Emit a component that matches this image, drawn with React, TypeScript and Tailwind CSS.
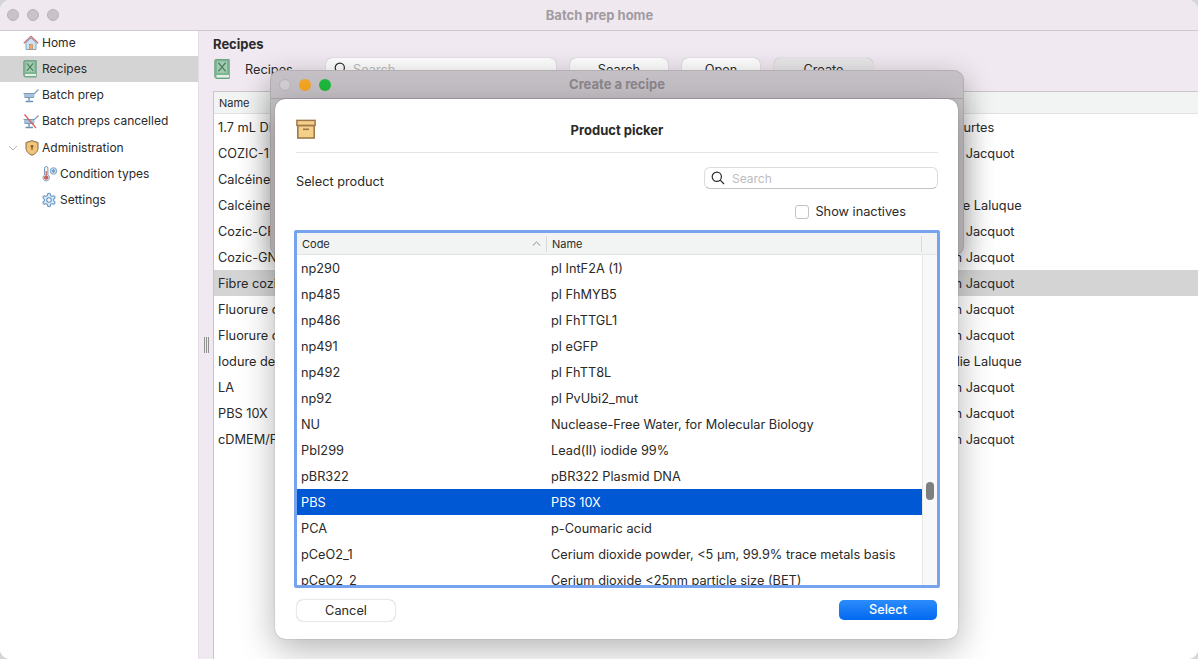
import React from "react";

const font = { fontFamily: '"Inter", "Liberation Sans", sans-serif' };

function HomeIcon() {
  return (
    <svg width="16" height="16" viewBox="0 0 16 16" className="shrink-0">
      <path d="M3 7.5V14.5H13V7.5L8 3Z" fill="#cfe3f2" stroke="#7da7c7" strokeWidth="1" />
      <rect x="6.5" y="9.5" width="3" height="5" fill="#eba96a" stroke="#c9824a" strokeWidth="0.6" />
      <path d="M0.8 8.3L8 1.3L15.2 8.3" fill="none" stroke="#c96a6a" strokeWidth="1.3" />
    </svg>
  );
}
function BookIcon({ size = 16 }: { size?: number }) {
  return (
    <svg width={size} height={size * 1.25} viewBox="0 0 16 20" className="shrink-0">
      <path d="M.8 1.8C.8 1 1.4 .5 2 .5H15.2V19.5H3C1.7 19.5 .8 18.6 .8 17.3Z" fill="#7fb593" stroke="#6aa381" strokeWidth="1" />
      <path d="M2.2 17.3C2.2 16.6 2.8 16 3.5 16H15V18.4H3.5C2.8 18.4 2.2 18 2.2 17.3Z" fill="#e3efe7" />
      <rect x="3" y="2.4" width="10" height="11.4" fill="#a3cbb1" />
      <path d="M4.4 3.8L11.6 12.4M11.6 3.8L4.4 12.4" stroke="#4a8461" strokeWidth="1.4" />
    </svg>
  );
}
function CartIcon({ cancelled = false }: { cancelled?: boolean }) {
  return (
    <svg width="16" height="16" viewBox="0 0 16 16" className="shrink-0">
      <path d="M.5 6.5H11.5L15.5 2.5" fill="none" stroke="#7d9cbc" strokeWidth="1.2" />
      <path d="M1 7H11.5V10H1Z" fill="#a9c2db" />
      <path d="M1.5 10.5H11" stroke="#7d9cbc" strokeWidth="1.2" />
      <path d="M6 10.5V13.5M2.5 14.5H10" stroke="#6f8fae" strokeWidth="1.4" />
      {cancelled && <path d="M1.5 1.5L13 15" stroke="#d8605c" strokeWidth="1.2" />}
    </svg>
  );
}
function ShieldIcon() {
  return (
    <svg width="14" height="16" viewBox="0 0 14 16" className="shrink-0">
      <path d="M7 .7L13 2.6V8C13 11.5 10.3 14 7 15.3 3.7 14 1 11.5 1 8V2.6Z" fill="#f3c478" stroke="#7d6a4c" strokeWidth="1" />
      <circle cx="7" cy="6.3" r="1.4" fill="#7d5f30" />
      <rect x="6.4" y="6.8" width="1.2" height="3.2" fill="#7d5f30" />
    </svg>
  );
}
function ThermoIcon() {
  return (
    <svg width="18" height="16" viewBox="0 0 18 16" className="shrink-0">
      <path d="M3.5 2.2a1.7 1.7 0 0 1 3.4 0V9a3.2 3.2 0 1 1-3.4 0Z" fill="#eef3f8" stroke="#7d98b5" strokeWidth="1" />
      <circle cx="5.2" cy="11.6" r="2.2" fill="#c9605a" />
      <rect x="4.6" y="5" width="1.2" height="6" fill="#c9605a" />
      <circle cx="12.5" cy="5" r="3.3" fill="#cfe0f0" stroke="#82a7cc" strokeWidth="1" />
      <path d="M12.5 2.8V7.2M10.6 3.9L14.4 6.1M14.4 3.9L10.6 6.1" stroke="#5f8cb8" strokeWidth="0.7" />
    </svg>
  );
}
function GearIcon() {
  return (
    <svg width="16" height="16" viewBox="0 0 24 24" className="shrink-0" fill="#dbe9f5" stroke="#5f93c4" strokeWidth="1.6">
      <path d="M12.22 2h-.44a2 2 0 0 0-2 2v.18a2 2 0 0 1-1 1.73l-.43.25a2 2 0 0 1-2 0l-.15-.08a2 2 0 0 0-2.73.73l-.22.38a2 2 0 0 0 .73 2.73l.15.1a2 2 0 0 1 1 1.72v.51a2 2 0 0 1-1 1.74l-.15.09a2 2 0 0 0-.73 2.73l.22.38a2 2 0 0 0 2.73.73l.15-.08a2 2 0 0 1 2 0l.43.25a2 2 0 0 1 1 1.73V20a2 2 0 0 0 2 2h.44a2 2 0 0 0 2-2v-.18a2 2 0 0 1 1-1.73l.43-.25a2 2 0 0 1 2 0l.15.08a2 2 0 0 0 2.73-.73l.22-.39a2 2 0 0 0-.73-2.73l-.15-.08a2 2 0 0 1-1-1.74v-.5a2 2 0 0 1 1-1.74l.15-.09a2 2 0 0 0 .73-2.73l-.22-.38a2 2 0 0 0-2.73-.73l-.15.08a2 2 0 0 1-2 0l-.43-.25a2 2 0 0 1-1-1.73V4a2 2 0 0 0-2-2z" />
      <circle cx="12" cy="12" r="3.4" fill="#fff" />
    </svg>
  );
}
function BoxIcon() {
  return (
    <svg width="20" height="20" viewBox="0 0 20 20" className="shrink-0">
      <rect x="1.8" y="6.5" width="16.4" height="12.5" fill="#f7cf88" stroke="#9c7a4c" strokeWidth="1.6" />
      <rect x=".9" y="1.4" width="18.2" height="5" fill="#f7cf88" stroke="#9c7a4c" strokeWidth="1.5" />
      <rect x="7" y="9.5" width="6" height="1.6" fill="#9c7a4c" />
    </svg>
  );
}
function SearchGlyph() {
  return (
    <svg width="14" height="14" viewBox="0 0 14 14" fill="none" stroke="#2b2b2b" strokeWidth="1.2" className="shrink-0">
      <circle cx="5.8" cy="5.8" r="4.6" />
      <path d="M9.2 9.2L13 13" />
    </svg>
  );
}

const navItems = [
  { icon: <HomeIcon />, label: "Home" },
  { icon: <BookIcon size={14} />, label: "Recipes", active: true },
  { icon: <CartIcon />, label: "Batch prep" },
  { icon: <CartIcon cancelled />, label: "Batch preps cancelled" },
];

const recipeRows = [
  ["1.7 mL DI", "Eva Courtes"],
  ["COZIC-1", "Florian Jacquot"],
  ["Calcéine", ""],
  ["Calcéine", "Nathalie Laluque"],
  ["Cozic-CF", "Florian Jacquot"],
  ["Cozic-GN", "Florian Jacquot"],
  ["Fibre cozi", "Florian Jacquot"],
  ["Fluorure d", "Florian Jacquot"],
  ["Fluorure d", "Florian Jacquot"],
  ["Iodure de", "Nathalie Laluque"],
  ["LA", "Florian Jacquot"],
  ["PBS 10X", "Florian Jacquot"],
  ["cDMEM/F", "Florian Jacquot"],
];

const products = [
  ["np290", "pl IntF2A (1)"],
  ["np485", "pl FhMYB5"],
  ["np486", "pl FhTTGL1"],
  ["np491", "pl eGFP"],
  ["np492", "pl FhTT8L"],
  ["np92", "pl PvUbi2_mut"],
  ["NU", "Nuclease-Free Water, for Molecular Biology"],
  ["PbI299", "Lead(II) iodide 99%"],
  ["pBR322", "pBR322 Plasmid DNA"],
  ["PBS", "PBS 10X"],
  ["PCA", "p-Coumaric acid"],
  ["pCeO2_1", "Cerium dioxide powder, <5 µm, 99.9% trace metals basis"],
  ["pCeO2_2", "Cerium dioxide <25nm particle size (BET)"],
];

function ToolButton({ label, width, shade }: { label: string; width: string; shade?: boolean }) {
  return (
    <div className={`${width} ${shade ? "bg-[#e9e7e9]" : "bg-white"} h-[22px] rounded-[6px] shadow-[0_0_1px_rgba(0,0,0,0.35)] flex items-center justify-center pt-[2px] text-[12.75px] text-[#2a2a2a]`}>
      {label}
    </div>
  );
}

export default function App() {
  return (
    <div style={font} className="relative w-[1198px] h-[659px] overflow-hidden bg-[#d5d5d8] text-[12.75px] text-[#2a2a2a] antialiased">
      {/* Main window */}
      <div className="w-full h-full flex flex-col rounded-[10px] overflow-hidden bg-white">
        <div className="relative h-[31px] shrink-0 bg-[#efe8ef] border-b border-[#cfcacf] flex items-center pl-[7px] gap-2">
          <span className="w-3 h-3 rounded-full bg-[#c9c2c9] border border-[#b9b3b9]" />
          <span className="w-3 h-3 rounded-full bg-[#c9c2c9] border border-[#b9b3b9]" />
          <span className="w-3 h-3 rounded-full bg-[#c9c2c9] border border-[#b9b3b9]" />
          <span className="flex-1 text-center font-bold text-[13px] text-[#a09ba0] pr-[66px] pt-[1px]">Batch prep home</span>
        </div>
        <div className="flex-1 flex min-h-0">
          <aside className="w-[198px] shrink-0 bg-white text-[12px]">
            <div className="flex flex-col -mt-px">
              {navItems.map((n) => (
                <div key={n.label} className={`h-[26px] flex items-center pl-[23px] ${n.active ? "bg-[#d4d4d4]" : ""}`}>
                  <span className="w-[19px] flex items-center">{n.icon}</span>
                  <span className="leading-none">{n.label}</span>
                </div>
              ))}
              <div className="h-[26px] flex items-center pl-[8px] pt-[1px]">
                <svg width="10" height="6" viewBox="0 0 10 6" fill="none" stroke="#b5b5b5" strokeWidth="1" className="mr-[7px]">
                  <path d="M1 1L5 5L9 1" />
                </svg>
                <span className="w-[17px] flex items-center"><ShieldIcon /></span>
                <span>Administration</span>
              </div>
              <div className="h-[26px] flex items-center pl-[41px] pt-[1px]">
                <span className="w-[19px] flex items-center"><ThermoIcon /></span>
                <span>Condition types</span>
              </div>
              <div className="h-[26px] flex items-center pl-[41px] pt-[1px]">
                <span className="w-[19px] flex items-center"><GearIcon /></span>
                <span>Settings</span>
              </div>
            </div>
          </aside>
          <main className="relative flex-1 min-w-0 bg-[#f1e9f1] border-l border-[#e3dde3] pl-[14px] flex flex-col">
            <h1 className="font-bold text-[13px] leading-none mt-[7px] h-[13px]">Recipes</h1>
            <div className="flex items-center h-[24px] mt-[6px]">
              <span className="w-[32px] pl-[1px]"><BookIcon size={16} /></span>
              <span className="w-[80px] pt-[2px]">Recipes</span>
              <div className="w-[230px] h-[22px] ml-[1px] bg-white rounded-[6px] shadow-[0_0_1px_rgba(0,0,0,0.35)] flex items-center gap-[5px] pl-2 text-[#bdbdbd]">
                <SearchGlyph />
                <span className="pt-[2px]">Search</span>
              </div>
              <div className="flex gap-[14px] ml-[14px]">
                <ToolButton label="Search" width="w-[98px]" />
                <ToolButton label="Open" width="w-[78px]" />
                <ToolButton label="Create" width="w-[99px]" shade />
              </div>
            </div>
            <div className="flex-1 mt-[10px] bg-white border-l border-t border-[#c9c6c9] min-h-0">
              <div className="h-[22px] bg-[#f2f4f3] border-b border-[#e2e2e2] flex items-center pl-[5px] pt-[2px] text-[11px]">Name</div>
              <div className="flex flex-col">
                {recipeRows.map(([name, author], i) => (
                  <div key={i} className={`h-[26px] pt-[2px] flex items-center ${i === 6 ? "bg-[#d4d4d4]" : ""}`}>
                    <span className="w-[707px] pl-[4px] shrink-0">{name}</span>
                    <span>{author}</span>
                  </div>
                ))}
              </div>
            </div>
            {/* splitter grip */}
            <div className="absolute left-[5px] top-[306px] flex gap-[1px]">
              <span className="w-px h-4 bg-[#8f8f8f]" />
              <span className="w-px h-4 bg-[#8f8f8f]" />
              <span className="w-px h-4 bg-[#8f8f8f]" />
            </div>
          </main>
        </div>
      </div>

      {/* Create a recipe window */}
      <div className="absolute left-[270px] top-[70px] w-[694px] h-[186px] rounded-[10px] bg-[#c5c0c5] border border-[#b3afb3] shadow-[0_8px_30px_rgba(0,0,0,0.3)]">
        <div className="h-[28px] border-b border-[#aaa6aa] flex items-center pl-2 gap-2">
          <span className="w-3 h-3 rounded-full bg-[#d3ced3] border border-[#b9b4b9]" />
          <span className="w-3 h-3 rounded-full bg-[#f5a623]" />
          <span className="w-3 h-3 rounded-full bg-[#1fb83c]" />
          <span className="flex-1 text-center font-bold text-[13px] text-[#8b878b] pr-[68px]">Create a recipe</span>
        </div>
      </div>

      {/* Product picker sheet */}
      <div className="absolute left-[275px] top-[99px] w-[683px] h-[540px] rounded-[10px] bg-white shadow-[0_0_1px_rgba(0,0,0,0.5),0_10px_35px_rgba(0,0,0,0.3)] flex flex-col pl-[21px] pr-[20px]">
        <div className="h-[54px] shrink-0 border-b border-[#e4e4e4] relative flex items-center justify-center">
          <span className="absolute left-0 top-[20px]"><BoxIcon /></span>
          <span className="font-bold text-[13px] mt-[10px]">Product picker</span>
        </div>
        <div className="h-[77px] shrink-0 flex justify-between">
          <span className="mt-[21px] leading-[16px]">Select product</span>
          <div className="w-[234px] flex flex-col items-end">
            <div className="w-full h-[22px] mt-[14px] rounded-[6px] border border-[#dcdcdc] border-b-[#c4c4c4] flex items-center pl-[6px] gap-[7px] text-[#bdbdbd] text-[12px]">
              <SearchGlyph />
              <span className="pt-[1px]">Search</span>
            </div>
            <div className="flex items-center gap-[6px] mt-[13px] mr-[32px]">
              <span className="w-[14px] h-[14px] rounded-[3px] border border-[#c4c4c4] bg-white" />
              <span>Show inactives</span>
            </div>
          </div>
        </div>
        <div className="-mx-[2px] h-[358px] shrink-0 rounded-[2px] border-[3px] border-[#76a2ee] flex flex-col overflow-hidden">
          <div className="h-[22px] shrink-0 bg-[#f2f4f3] border-b border-[#e2e2e2] flex items-center text-[11px]">
            <div className="w-[250px] pl-[5px] h-[16px] border-r border-[#d9d9d9] flex items-center justify-between pr-[5px]">
              <span className="pt-[2px]">Code</span>
              <svg width="9" height="5" viewBox="0 0 9 5" fill="none" stroke="#8c8c8c" strokeWidth="1"><path d="M.8 4.5L4.5 1L8.2 4.5" /></svg>
            </div>
            <div className="w-[375px] pl-[5px] h-[16px] pt-[2px] border-r border-[#d9d9d9] flex items-center">Name</div>
          </div>
          <div className="flex-1 flex min-h-0">
            <div className="flex-1 min-w-0 overflow-hidden">
              {products.map(([code, name]) => {
                const sel = code === "PBS";
                return (
                  <div key={code} className={`h-[26px] pt-[2px] flex items-center ${sel ? "bg-[#0058d4] text-white" : ""}`}>
                    <span className="w-[254px] pl-[4px] shrink-0">{code}</span>
                    <span>{name}</span>
                  </div>
                );
              })}
            </div>
            <div className="relative w-[15px] shrink-0 bg-[#f8f8f8] border-l border-[#e6e6e6]">
              <span className="absolute left-[3px] top-[227px] w-[8px] h-[18px] rounded-full bg-[#7f7f7f]" />
            </div>
          </div>
        </div>
        <div className="flex justify-between mt-[12px] px-[1px]">
          <div className="w-[98px] h-[21px] rounded-[6px] bg-white shadow-[0_0_1.5px_rgba(0,0,0,0.45)] flex items-center justify-center">Cancel</div>
          <div className="w-[98px] h-[20px] -mr-[1px] -translate-x-[1px] rounded-[5px] bg-gradient-to-b from-[#2a8cfb] to-[#0069f0] text-white flex items-center justify-center font-medium">Select</div>
        </div>
      </div>
    </div>
  );
}
